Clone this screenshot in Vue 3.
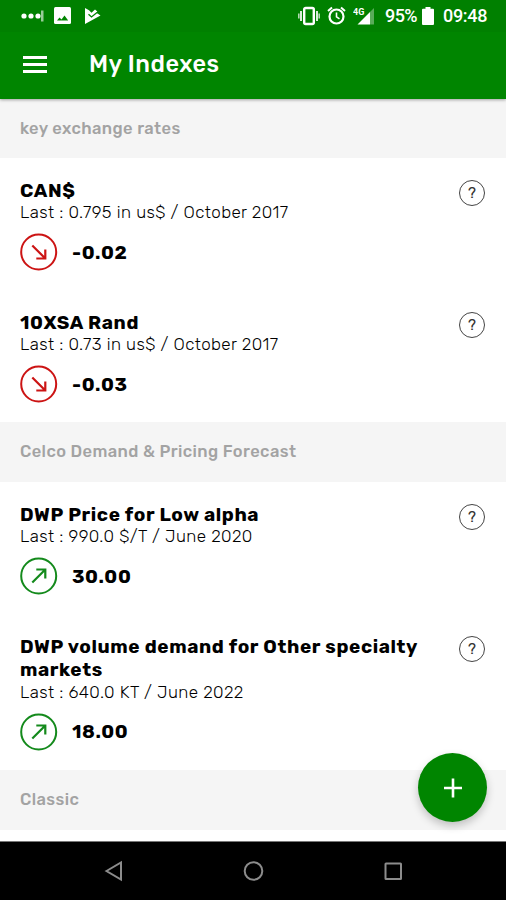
<template>
  <div class="screen">
    <header class="top">
      <div class="status-bar">
        <div class="status-left">
          <svg width="24" height="14" viewBox="0 0 24 14" fill="#fff">
            <circle cx="4" cy="7" r="2.6" />
            <circle cx="11" cy="7" r="2.6" />
            <circle cx="18" cy="7" r="2.6" />
            <rect x="21" y="1.5" width="2.5" height="11" opacity="0.6" />
          </svg>
          <svg class="picture" width="17" height="17" viewBox="0 0 17 17">
            <rect width="17" height="17" rx="1.5" fill="#fff" />
            <path d="M3 13.5l2.500-3 2 2 3-4 3.700 5z" fill="#008500" />
          </svg>
          <svg class="play" width="17" height="18" viewBox="0 0 17 18">
            <path d="M1 1l4 2.300 2.500 2.500 3.500-3.300 2.300 2-1 1.300 4.200 2.800L1 17z" fill="#fff" />
            <path d="M4.500 7.200l3 2.800 5.500-4.600" fill="none" stroke="#008500" stroke-width="1.300" />
          </svg>
        </div>
        <div class="status-right">
          <svg width="24" height="20" viewBox="0 0 24 20" fill="none" stroke="#fff">
            <rect x="7.200" y="2" width="9.600" height="16" rx="1.5" stroke-width="2.4" />
            <path d="M4 5v10M20 5v10" stroke-width="2" opacity="0.85" />
            <path d="M1.800 7.5v5M22.200 7.5v5" stroke-width="1.6" opacity="0.7" />
          </svg>
          <svg class="alarm" width="19" height="20" viewBox="0 0 19 20" fill="none" stroke="#fff">
            <circle cx="9.5" cy="10.500" r="7" stroke-width="2.200" />
            <path d="M1 5l4-3.4M18 5l-4-3.4" stroke-width="2" />
            <path d="M9.5 6.500v4.3l3 2" stroke-width="1.6" />
          </svg>
          <svg class="signal" width="22" height="20" viewBox="0 0 22 20">
            <text x="0" y="8.5" class="net">4G</text>
            <path d="M4.5 18.5L17 6v12.500z" fill="#fff" />
            <path d="M17 6l4-4v16.500h-4z" fill="#fff" opacity="0.35" />
          </svg>
          <span class="percent">95%</span>
          <svg class="battery" width="12" height="18" viewBox="0 0 12 18">
            <path d="M3.500 0h5v1.800H11a1 1 0 0 1 1 1V17a1 1 0 0 1-1 1H1a1 1 0 0 1-1-1V2.800a1 1 0 0 1 1-1h2.500z" fill="#fff" />
          </svg>
          <span class="clock">09:48</span>
        </div>
      </div>
      <div class="app-bar">
        <button class="menu" aria-label="Menu">
          <span></span><span></span><span></span>
        </button>
        <h1>My Indexes</h1>
      </div>
    </header>

    <main class="list">
      <section v-for="group in groups" :key="group.title">
        <h2 class="group-title">{{ group.title }}</h2>
        <article v-for="item in group.items" :key="item.name" class="item">
          <div class="item-text">
            <h3>{{ item.name }}</h3>
            <p class="last">Last : {{ item.last }}</p>
            <div class="change">
              <svg width="38" height="38" viewBox="0 0 38 38" fill="none" :class="item.up ? 'up' : 'down'">
                <circle cx="18.700" cy="19" r="17.500" stroke-width="2" />
                <path v-if="item.up" d="M12.300 25.500L25.300 12.500M16.300 12.500h9v9" stroke-width="2.200" />
                <path v-else d="M12.300 12.500l13 13M16.300 25.500h9v-9" stroke-width="2.200" />
              </svg>
              <span class="value">{{ item.value }}</span>
            </div>
          </div>
          <button class="help" aria-label="Help">?</button>
        </article>
      </section>
    </main>

    <button class="fab" aria-label="Add">
      <svg width="18" height="20" viewBox="0 0 18 20">
        <path d="M9 .5v19M0 10h18" stroke="#fff" stroke-width="2.600" />
      </svg>
    </button>

    <nav class="nav-bar">
      <svg width="20" height="22" viewBox="0 0 20 22">
        <path d="M3.500 11L18 2.500v17z" />
      </svg>
      <svg width="22" height="22" viewBox="0 0 22 22">
        <circle cx="11.500" cy="11" r="8.800" />
      </svg>
      <svg width="20" height="20" viewBox="0 0 20 20">
        <rect x="2.500" y="2.500" width="15.500" height="15.500" rx="0.500" />
      </svg>
    </nav>
  </div>
</template>

<script setup>
const groups = [
  {
    title: "key exchange rates",
    items: [
      { name: "CAN$", last: "0.795 in us$ / October 2017", value: "-0.02", up: false },
      { name: "10XSA Rand", last: "0.73 in us$ / October 2017", value: "-0.03", up: false },
    ],
  },
  {
    title: "Celco Demand & Pricing Forecast",
    items: [
      { name: "DWP Price for Low alpha", last: "990.0 $/T / June 2020", value: "30.00", up: true },
      { name: "DWP volume demand for Other specialty markets", last: "640.0 KT / June 2022", value: "18.00", up: true },
    ],
  },
  { title: "Classic", items: [] },
];
</script>

<style>
body {
  margin: 0;
  background: #fff;
}
</style>

<style scoped>
.screen {
  position: relative;
  width: 506px;
  height: 900px;
  overflow: hidden;
  display: flex;
  flex-direction: column;
  background: #fff;
  color: #000;
  font-family: Rubik, Inter, "Liberation Sans", sans-serif;
}

h1,
h2,
h3,
p {
  margin: 0;
}

button {
  border: none;
  background: none;
  padding: 0;
  font-family: inherit;
}

svg {
  display: block;
  flex: none;
}

.top {
  height: 99px;
  flex: none;
  background: #008500;
  color: #fff;
  box-shadow: 0 1px 3px rgba(0, 0, 0, 0.35);
  z-index: 1;
}

.status-bar {
  height: 32px;
  background: #008000;
  display: flex;
  justify-content: space-between;
  padding: 0 18px 0 20px;
}

.status-left,
.status-right {
  display: flex;
  align-items: center;
}

.status-left {
  height: 31px;
}

.picture {
  margin-left: 10px;
}

.play {
  margin-left: 13px;
}

.alarm {
  margin-left: 6px;
}

.signal {
  margin-left: 7px;
}

.net {
  font: 700 9px Roboto, sans-serif;
  fill: #fff;
}

.percent,
.clock {
  font: 500 18px/32px Roboto, sans-serif;
}

.percent {
  margin-left: 10px;
  width: 33px;
  letter-spacing: -0.6px;
}

.battery {
  margin-left: 4px;
}

.clock {
  margin-left: 9px;
  width: 45px;
  letter-spacing: -0.3px;
}

.app-bar {
  height: 64px;
  display: flex;
  align-items: center;
  padding-left: 23px;
}

.menu {
  width: 24px;
  display: flex;
  flex-direction: column;
  gap: 4px;
}

.menu span {
  height: 3px;
  background: #fff;
}

h1 {
  margin-left: 42px;
  font-size: 23.5px;
  font-weight: 500;
  letter-spacing: 0.5px;
}

.list {
  flex: 1;
  min-height: 0;
  overflow: hidden;
}

.group-title {
  height: 60px;
  box-sizing: border-box;
  padding: 0 20px 1px;
  display: flex;
  align-items: center;
  background: #f5f5f5;
  color: #a3a3a3;
  font-size: 16.5px;
  font-weight: 500;
  letter-spacing: 0.4px;
}

section:first-child .group-title {
  height: 59px;
}

.item {
  display: flex;
  justify-content: space-between;
  padding: 20.500px 21px 19px 20px;
}

.item-text {
  width: 415px;
}

h3 {
  font-size: 19px;
  font-weight: 700;
  line-height: 23.500px;
  letter-spacing: 0.6px;
}

.last {
  font-size: 17px;
  font-weight: 300;
  line-height: 21px;
  letter-spacing: 0.4px;
  white-space: nowrap;
}

.change {
  margin-top: 10px;
  height: 38px;
  display: flex;
  align-items: center;
}

.up {
  stroke: #148a1c;
}

.down {
  stroke: #cc1414;
}

.value {
  margin-left: 14px;
  font-size: 19px;
  font-weight: 700;
  letter-spacing: 0.6px;
}

.help {
  width: 26px;
  height: 26px;
  box-sizing: border-box;
  margin-top: 1px;
  border: 1.500px solid #444;
  border-radius: 50%;
  color: #333;
  font-size: 15px;
  font-weight: 400;
  line-height: 22px;
}

.fab {
  position: absolute;
  right: 19px;
  top: 753px;
  width: 69px;
  height: 69px;
  border-radius: 50%;
  background: #008500;
  display: flex;
  align-items: center;
  justify-content: center;
  box-shadow: 0 4px 9px rgba(0, 0, 0, 0.22);
  z-index: 2;
}

.nav-bar {
  height: 59px;
  flex: none;
  box-sizing: border-box;
  border-top: 1px solid #777;
  background: #000;
  display: flex;
  align-items: center;
  justify-content: space-between;
  padding: 0 103px;
}

.nav-bar svg {
  fill: none;
  stroke: #8c8c8c;
  stroke-width: 2;
}
</style>
